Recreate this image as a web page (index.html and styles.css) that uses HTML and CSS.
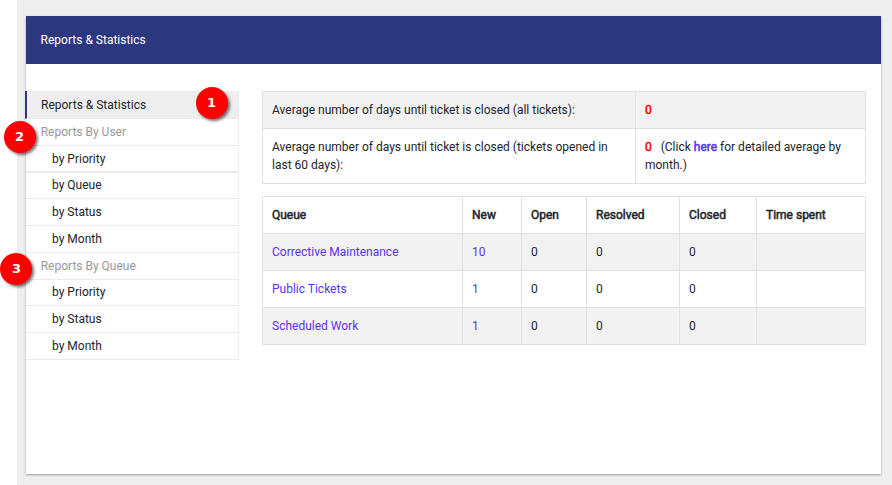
FILE: index.html
```html
<!DOCTYPE html>
<html lang="en">
<head>
<meta charset="utf-8">
<title>Reports &amp; Statistics</title>
<link rel="stylesheet" href="styles.css">
</head>
<body>
<main class="card">
<header class="bar">Reports &amp; Statistics</header>
<div class="content">
<nav class="menu">
<a class="item active">Reports &amp; Statistics</a>
<div class="item heading">Reports By User</div>
<a class="item sub thick">by Priority</a>
<a class="item sub raised">by Queue</a>
<a class="item sub">by Status</a>
<a class="item sub">by Month</a>
<div class="item heading">Reports By Queue</div>
<a class="item sub raised">by Priority</a>
<a class="item sub">by Status</a>
<a class="item sub">by Month</a>
<span class="badge b1">1</span>
<span class="badge b2">2</span>
<span class="badge b3">3</span>
</nav>
<section class="reports">
<table class="averages">
<colgroup><col class="c-label"><col></colgroup>
<tr class="shade"><td>Average number of days until ticket is closed (all tickets):</td><td><span class="num">0</span></td></tr>
<tr><td>Average number of days until ticket is closed (tickets opened in last 60 days):</td><td><span class="num">0</span>&nbsp;&nbsp; (Click <a class="here">here</a> for detailed average by month.)</td></tr>
</table>
<table class="queues">
<colgroup><col class="c1"><col class="c2"><col class="c3"><col class="c4"><col class="c5"><col></colgroup>
<tr><th>Queue</th><th>New</th><th>Open</th><th>Resolved</th><th>Closed</th><th>Time spent</th></tr>
<tr class="shade"><td><a>Corrective Maintenance</a></td><td><a>10</a></td><td>0</td><td>0</td><td>0</td><td></td></tr>
<tr><td><a>Public Tickets</a></td><td><a>1</a></td><td>0</td><td>0</td><td>0</td><td></td></tr>
<tr class="shade"><td><a>Scheduled Work</a></td><td><a>1</a></td><td>0</td><td>0</td><td>0</td><td></td></tr>
</table>
</section>
</div>
</main>
</body>
</html>
```
FILE: styles.css
```css
* { box-sizing: border-box; }
html { background: #fff; }
body {
  margin: 0;
  height: 485px;
  padding: 16px 11px 11px 26px;
  background: linear-gradient(to right, #fff 17px, #eee 17px);
  font: 12px/18px Roboto, sans-serif;
  color: #212529;
}
.card {
  height: 458px;
  background: #fff;
  box-shadow: 0 1px 2px rgba(0, 0, 0, .35);
}
.bar {
  height: 48px;
  padding: 0 14.6px;
  line-height: 48px;
  background: #2b387f;
  color: #fff;
}
.content { display: flex; padding: 27px 15px 0 0; }
.menu { position: relative; width: 213px; margin-right: 23px; border-right: 1px solid #eee; }
.item {
  display: block;
  height: 27px;
  padding-left: 14.7px;
  line-height: 26px;
  border-bottom: 1px solid #ebebeb;
}
.active {
  height: 28px;
  margin: 0 -1px 0 -1px;
  padding-left: 14px;
  line-height: 28px;
  background: #eee;
  border-left: 2px solid #2b387f;
}
.heading { color: #999; }
.sub { padding-left: 26px; }
.thick { border-bottom-width: 2px; }
.raised { height: 26px; line-height: 25px; }
.thick + .raised { line-height: 24px; }
.badge {
  position: absolute;
  width: 32px;
  height: 32px;
  border-radius: 50%;
  background: #f00;
  color: #fff;
  font: bold 13px/32px "DejaVu Sans", sans-serif;
  text-align: center;
  box-shadow: 2px 2px 3px rgba(0, 0, 0, .55);
}
.b1 { left: 169.5px; top: -4px; }
.b2 { left: -22.5px; top: 30px; }
.b3 { left: -25.6px; top: 162px; }
.reports { width: 604px; }
table { width: 604px; table-layout: fixed; border-collapse: collapse; }
td, th { height: 37px; padding: 9px; border: 1px solid #dee2e6; text-align: left; vertical-align: top; }
.shade { background: #f2f2f2; }
.averages { margin-bottom: 12px; }
.c-label { width: 373px; }
.c1 { width: 200px; }
.c2 { width: 59px; }
.c3 { width: 65px; }
.c4 { width: 93px; }
.c5 { width: 77px; }
th, .num, .here { font-weight: 400; -webkit-text-stroke: .5px currentColor; }
.num { color: #f00; }
a:not(.item) { color: #5b30f6; }
```
